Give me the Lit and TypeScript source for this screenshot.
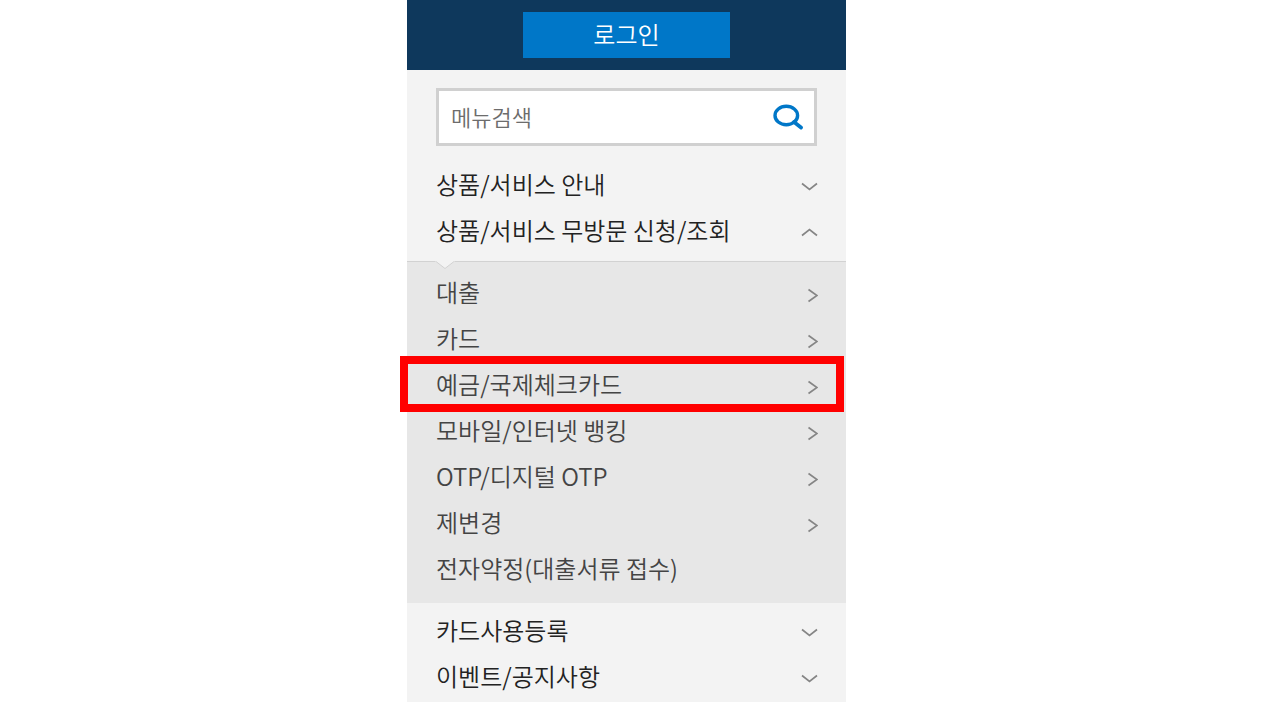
import { LitElement, html, css, svg } from "lit";
import { customElement, property } from "lit/decorators.js";
import { classMap } from "lit/directives/class-map.js";

const chevrons = {
  down: svg`<path d="M2 11.5 L9.5 17.5 L17 11.5" />`,
  up: svg`<path d="M2 17.5 L9.5 11.5 L17 17.5" />`,
  right: svg`<path d="M8.5 9.5 L17 15.5 L8.5 21.5" />`,
};

const iconStyles = css`
  .chevron {
    flex: none;
    width: 18px;
    height: 24px;
    fill: none;
    stroke: #858585;
    stroke-width: 1.7;
  }
`;

@customElement("menu-group")
class MenuGroup extends LitElement {
  @property() label = "";
  @property({ type: Boolean }) open = false;

  static styles = [
    iconStyles,
    css`
      :host {
        display: block;
      }
      .toggle {
        display: flex;
        box-sizing: border-box;
        align-items: center;
        justify-content: space-between;
        width: 100%;
        height: 46px;
        padding: 0 28px 2px 29px;
        border: 0;
        background: none;
        color: #222;
        font: inherit;
        text-align: left;
        cursor: pointer;
      }
    `,
  ];

  render() {
    return html`
      <button
        class="toggle"
        type="button"
        aria-expanded=${this.open ? "true" : "false"}
        @click=${() => this.dispatchEvent(new CustomEvent("toggle-group"))}
      >
        <span>${this.label}</span>
        <svg class="chevron" viewBox="0 0 18 24" aria-hidden="true">
          ${this.open ? chevrons.up : chevrons.down}
        </svg>
      </button>
    `;
  }
}

@customElement("app-root")
class AppRoot extends LitElement {
  @property({ type: Boolean }) expanded = true;

  private items = [
    { label: "대출", arrow: true },
    { label: "카드", arrow: true },
    { label: "예금/국제체크카드", arrow: true, marked: true },
    { label: "모바일/인터넷 뱅킹", arrow: true },
    { label: "OTP/디지털 OTP", arrow: true },
    { label: "제변경", arrow: true },
    { label: "전자약정(대출서류 접수)", arrow: false },
  ];

  static styles = [
    iconStyles,
    css`
      :host {
        display: grid;
        grid-template-columns: 407fr 439fr 434fr;
        align-items: start;
        min-height: 100vh;
        background: #fff;
        font-family: "Noto Sans CJK KR", "Noto Sans", sans-serif;
        font-size: 24px;
        line-height: 32px;
        font-weight: 350;
      }
      * {
        box-sizing: border-box;
      }
      .drawer {
        grid-column: 2;
        padding-bottom: 2px;
        background: #f3f3f3;
      }
      .top {
        display: flex;
        justify-content: center;
        padding: 12px 0;
        background: #0e385c;
      }
      .login {
        width: 47%;
        height: 46px;
        padding: 0 0 2px;
        border: 0;
        background: #0077c8;
        color: #fff;
        font: inherit;
        cursor: pointer;
      }
      .search {
        display: flex;
        align-items: center;
        height: 58px;
        margin: 18px 29px 16px;
        padding: 0 10px 0 12px;
        border: 3px solid #d0d0d0;
        background: #fff;
        font-size: 22px;
      }
      .query {
        flex: 1;
        min-width: 0;
        height: 100%;
        padding: 0 0 2px;
        border: 0;
        outline: 0;
        background: none;
        color: #222;
        font: inherit;
      }
      .query::placeholder {
        color: #6c6c6c;
        opacity: 1;
      }
      .find {
        display: flex;
        padding: 0;
        border: 0;
        background: none;
        cursor: pointer;
      }
      .glass {
        width: 32px;
        height: 26px;
        fill: none;
        stroke: #0077c8;
        stroke-width: 3.4;
        stroke-linecap: round;
      }
      .sub {
        position: relative;
        margin: 7px 0 5px;
        border-top: 1px solid #d2d2d2;
        background: #e7e7e7;
      }
      .list {
        margin: 0;
        padding: 8px 0 11px;
        list-style: none;
      }
      .notch {
        position: absolute;
        top: -2px;
        left: 28px;
        width: 20px;
        height: 10px;
      }
      .item {
        position: relative;
      }
      .item.marked::after {
        content: "";
        position: absolute;
        inset: -6px 2px -4px -7px;
        border: 8px solid #f00;
        pointer-events: none;
      }
      .link {
        display: flex;
        align-items: center;
        justify-content: space-between;
        height: 46px;
        padding: 0 28px 2px 29px;
        color: #444;
        text-decoration: none;
      }
    `,
  ];

  render() {
    return html`
      <div class="drawer">
        <header class="top">
          <button class="login" type="button">로그인</button>
        </header>
        <form class="search" role="search" @submit=${(e: Event) => e.preventDefault()}>
          <input class="query" type="text" placeholder="메뉴검색" aria-label="메뉴검색" />
          <button class="find" type="submit" aria-label="검색">
            <svg class="glass" viewBox="0 0 32 26" aria-hidden="true">
              <ellipse cx="14.3" cy="11.5" rx="11.3" ry="9.2" />
              <path d="M22 18 L29 23.5" stroke-width="3.8" />
            </svg>
          </button>
        </form>
        <nav>
          <menu-group label="상품/서비스 안내"></menu-group>
          <menu-group
            label="상품/서비스 무방문 신청/조회"
            ?open=${this.expanded}
            @toggle-group=${() => (this.expanded = !this.expanded)}
          ></menu-group>
          ${this.expanded
            ? html`<div class="sub">
                <ul class="list">
                  ${this.items.map(
                    (item) => html`<li class=${classMap({ item: true, marked: !!item.marked })}>
                      <a class="link" href="#">
                        <span>${item.label}</span>
                        ${item.arrow
                          ? html`<svg class="chevron" viewBox="0 0 18 24" aria-hidden="true">
                              ${chevrons.right}
                            </svg>`
                          : null}
                      </a>
                    </li>`
                  )}
                </ul>
                <svg class="notch" viewBox="0 0 20 10" aria-hidden="true">
                  <path d="M0 0 H20 V1 L10 8.5 L0 1 Z" fill="#f3f3f3" />
                  <path d="M1 1.5 L10 8.5 L19 1.5" fill="none" stroke="#d2d2d2" />
                </svg>
              </div>`
            : null}
          <menu-group label="카드사용등록"></menu-group>
          <menu-group label="이벤트/공지사항"></menu-group>
        </nav>
      </div>
    `;
  }
}
